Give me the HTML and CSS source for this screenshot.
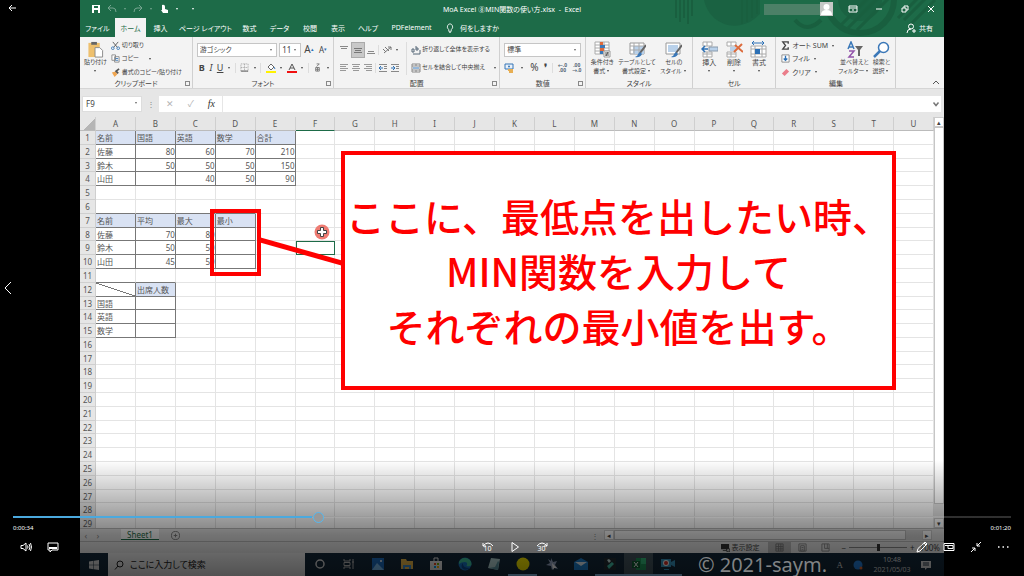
FILE: index.html
```html
<!DOCTYPE html>
<html lang="ja">
<head>
<meta charset="utf-8">
<title>MoA Excel ⑧MIN関数の使い方.xlsx - Excel</title>
<link rel="stylesheet" href="styles.css">
</head>
<body>
<div class="player">
<main class="screen">
  <header class="titlebar">
    <svg class="pattern" viewBox="0 0 280 37" aria-hidden="true"><g fill="none" stroke="#195f3f" stroke-width="2">
      <path d="M12 0v18M16 0v22M20 0v18M24 0v24M28 0v16"/>
      <path d="M40 0h56v14q-4 4-10 8-20 9-36-4-8-8-10-18z" fill="#1a6242" stroke="none"/><path d="M78 0v24M83 0v22M88 0v18M93 0v14"/>
      <path d="M131 20q12 14 26 0" stroke-width="4"/><circle cx="196" cy="-1" r="34" stroke-width="6"/><circle cx="196" cy="-1" r="22" fill="#1a6242" stroke="none"/>
      <path d="M177 25l28-28M184 28l32-32M193 30l32-32M234 18l24-24M240 20l30-30M247 24l24-24" stroke-width="3"/></g></svg>
    <div class="quick">
      <button aria-label="保存"><svg viewBox="0 0 10 10" class="i10"><path d="M1 1h8v8H1z" fill="#fff"/><path d="M3 2h4v2H3zM3 6h4v3H3z" fill="#1d6b48"/></svg></button>
      <button class="dim" aria-label="元に戻す"><svg viewBox="0 0 10 10" class="i10"><path d="M4 1L1 4l3 3M1 4h5q3 0 3 4" fill="none" stroke="currentColor"/></svg></button><i class="dd dim"></i>
      <button class="dim" aria-label="やり直し"><svg viewBox="0 0 10 10" class="i10"><path d="M6 1l3 3-3 3M9 4H4Q1 4 1 8" fill="none" stroke="currentColor"/></svg></button><i class="dd dim"></i>
      <button aria-label="タッチ"><svg viewBox="0 0 10 10" class="i10"><path d="M3 1a2 2 0 0 1 3 2v2l3 1v3H4L2 6h1z" fill="#fff"/></svg></button><i class="dd"></i><i class="dd gap"></i>
    </div>
    <h1>MoA Excel ⑧MIN関数の使い方.xlsx&nbsp; -&nbsp; Excel</h1>
    <div class="win">
      <span class="account"></span>
      <svg viewBox="0 0 13 14" class="avatar"><path d="M0 0h13v14H0z" fill="#c5c8c6"/><circle cx="6.500" cy="5" r="3" fill="#fff"/><path d="M1 13q0-5 5.500-5t5.500 5z" fill="#fff"/></svg>
      <button aria-label="リボン表示"><svg viewBox="0 0 10 10" class="i10"><path d="M1 2h8v6H1zM1 4h8M5 7V5" fill="none" stroke="#fff"/></svg></button>
      <button aria-label="最小化"><svg viewBox="0 0 10 10" class="i10"><path d="M2 5h6" stroke="#fff"/></svg></button>
      <button aria-label="元のサイズ"><svg viewBox="0 0 10 10" class="i10"><path d="M2 4h4v4H2zM4 4V2h4v4H6" fill="none" stroke="#fff"/></svg></button>
      <button aria-label="閉じる"><svg viewBox="0 0 10 10" class="i10"><path d="M2 2l6 6M8 2L2 8" stroke="#fff"/></svg></button>
    </div>
  </header>
  <nav class="tabs">
    <button>ファイル</button><button class="on">ホーム</button><button>挿入</button><button>ページ レイアウト</button><button>数式</button><button>データ</button><button>校閲</button><button>表示</button><button>ヘルプ</button><button>PDFelement</button>
    <button class="tell"><svg viewBox="0 0 10 12" class="i10"><path d="M3.500 8Q1 6 2 3.500 3 1 5 1t3 2.500Q9 6 6.500 8v2h-3zM4 11.500h2" fill="none" stroke="#fff"/></svg>何をしますか</button>
    <button class="share"><svg viewBox="0 0 10 10" class="i10"><circle cx="5" cy="3.500" r="2.500" fill="none" stroke="#fff"/><path d="M1 10q0-4 4-4M6 8h4M8 6v4" fill="none" stroke="#fff"/></svg>共有</button>
  </nav>

  <section class="ribbon">
    <div class="group g-clip small"><div class="body">
      <button class="big"><svg viewBox="0 0 17 18" class="i17"><path d="M1 2h12v15H1z" fill="#eec06e"/><path d="M4 1h6v3H4z" fill="#666"/><path d="M8 7h5l3 3v7H8z" fill="#fff" stroke="#888"/></svg>貼り付け<i class="dd"></i></button>
      <div class="list">
        <button><svg viewBox="0 0 10 10" class="i9"><path d="M2 1l5 6M8 1L3 7" stroke="#555" fill="none"/><circle cx="2" cy="8" r="1.500" fill="none" stroke="#3d7ab8"/><circle cx="8" cy="8" r="1.500" fill="none" stroke="#3d7ab8"/></svg>切り取り</button>
        <button><svg viewBox="0 0 10 10" class="i9"><path d="M1 1h4v6H1zM4 3h5v6H4z" fill="#fff" stroke="#888"/><path d="M5 5h3M5 7h3" stroke="#3d7ab8"/></svg>コピー<i class="dd gap"></i></button>
        <button><svg viewBox="0 0 10 10" class="i9"><path d="M1 5l4-1 2 3-3 3z" fill="#efa550"/><path d="M5 4l4-3M5 3l3 3" stroke="#555" stroke-width="2"/></svg>書式のコピー/貼り付け</button>
      </div></div><div class="label">クリップボード<i class="launch"></i></div></div>

    <div class="group g-font"><div class="body rows">
      <div class="row"><span class="sel wide"><select aria-label="フォント"><option>游ゴシック</option></select></span><span class="sel size"><select aria-label="サイズ"><option>11</option></select></span><button class="fa">A<sup>▴</sup></button><button class="fb">A<sup>▾</sup></button></div>
      <div class="row tools"><button><b>B</b></button><button><em>I</em></button><button><u>U</u></button><i class="dd"></i><i class="sep"></i>
        <button aria-label="罫線"><svg viewBox="0 0 10 10" class="i9"><path d="M1 1h8v8H1zM5 1v8M1 5h8" fill="none" stroke="#999" stroke-dasharray="1 1"/><path d="M1 9h8" stroke="#555"/></svg></button><i class="dd"></i><i class="sep"></i>
        <button aria-label="塗りつぶし"><svg viewBox="0 0 10 10" class="i10"><path d="M2 4l3-3 3 3-3 3z" fill="#fff" stroke="#666"/><path d="M8 4l1 2" stroke="#3d7ab8"/><path d="M0 8h10v2H0z" fill="#fff200"/></svg></button><i class="dd"></i>
        <button aria-label="フォントの色"><svg viewBox="0 0 10 10" class="i10"><path d="M2 7l3-6 3 6M3 5h4" fill="none" stroke="#555"/><path d="M0 8h10v2H0z" fill="#f01010"/></svg></button><i class="dd"></i><i class="sep"></i>
        <button aria-label="ふりがな"><svg viewBox="0 0 10 10" class="i9"><path d="M4 1h3L4 4M3 5h4v4H3zM3 7h4M5 5v4" fill="none" stroke="#777"/></svg></button><i class="dd"></i></div>
      </div><div class="label">フォント<i class="launch"></i></div></div>

    <div class="group g-align"><div class="body two">
      <div class="rows"><div class="row tools">
        <button aria-label="上揃え"><svg viewBox="0 0 10 10" class="i10"><path d="M1 1.500h8M2 3.500h6" stroke="#888"/></svg></button>
        <button class="pressed" aria-label="上下中央揃え"><svg viewBox="0 0 10 10" class="i10"><path d="M1 3.500h8M2 5.500h6M1 7.500h8" stroke="#777"/></svg></button>
        <button aria-label="下揃え"><svg viewBox="0 0 10 10" class="i10"><path d="M2 6.500h6M1 8.500h8" stroke="#888"/></svg></button><i class="sep"></i>
        <button aria-label="方向"><svg viewBox="0 0 10 10" class="i10"><path d="M1 4l3 3M3 2l4 4M2 8l7-6M6 2h3v3" fill="none" stroke="#777"/></svg></button><i class="dd"></i></div>
      <div class="row tools">
        <button aria-label="左揃え"><svg viewBox="0 0 10 10" class="i10"><path d="M1 1.500h8M1 3.500h6M1 5.500h8M1 7.500h6" stroke="#999"/></svg></button>
        <button aria-label="中央揃え"><svg viewBox="0 0 10 10" class="i10"><path d="M1 1.500h8M2 3.500h6M1 5.500h8M2 7.500h6" stroke="#999"/></svg></button>
        <button aria-label="右揃え"><svg viewBox="0 0 10 10" class="i10"><path d="M1 1.500h8M3 3.500h6M1 5.500h8M3 7.500h6" stroke="#999"/></svg></button><i class="sep"></i>
        <button aria-label="インデント減"><svg viewBox="0 0 10 10" class="i10"><path d="M1 1.500h8M6 3.500h3M6 5.500h3M1 8.500h8" stroke="#888"/><path d="M5 5H1M3 3L1 5l2 2" fill="none" stroke="#2c70b5"/></svg></button>
        <button aria-label="インデント増"><svg viewBox="0 0 10 10" class="i10"><path d="M1 1.500h8M6 3.500h3M6 5.500h3M1 8.500h8" stroke="#888"/><path d="M1 5h4M3 3l2 2-2 2" fill="none" stroke="#2c70b5"/></svg></button></div></div>
      <div class="rows wrap small"><div class="row"><button><svg viewBox="0 0 10 10" class="i10"><path d="M1 4h2v3H1zM5 1v4h2V3H5M2 9h5M9 5v4H7" fill="none" stroke="#567"/></svg>折り返して全体を表示する</button></div>
      <div class="row"><button><svg viewBox="0 0 10 10" class="i10"><path d="M1 1h8v8H1zM1 3h8M1 7h8M5 1v2M5 7v2" fill="#fff" stroke="#888"/><path d="M2 5h6" stroke="#2c70b5"/></svg>セルを結合して中央揃え<i class="dd gap"></i></button></div></div>
      </div><div class="label">配置<i class="launch"></i></div></div>

    <div class="group g-num"><div class="body rows">
      <div class="row"><span class="sel full"><select aria-label="表示形式"><option>標準</option></select></span></div>
      <div class="row tools"><button aria-label="通貨"><svg viewBox="0 0 10 10" class="i10"><path d="M1 1h8v5H1z" fill="#e8f1fb" stroke="#3575b5"/><circle cx="5" cy="3.500" r="1" fill="#3575b5"/><path d="M4 7h5M5 9h4" stroke="#e7ae52" stroke-width="2"/></svg></button><i class="dd"></i><button class="pct">%</button><button class="pct"><b>❜</b></button><i class="sep"></i>
      <button class="dec">←.0<br>.00</button><button class="dec">.00<br>→.0</button></div>
      </div><div class="label">数値<i class="launch"></i></div></div>

    <div class="group g-style"><div class="body small">
      <button class="big"><svg viewBox="0 0 17 17" class="i17"><path d="M1 1h14v12H1zM1 4h14M1 7h14M1 10h14M6 1v12M10 1v12" fill="#fff" stroke="#aaa"/><path d="M6 1h3v3H6zM6 7h4v3H6z" fill="#e0693a"/><path d="M6 4h5v3H6zM6 10h3v3H6z" fill="#3b78b8"/><path d="M10 10h6v6h-6z" fill="#fff" stroke="#999"/><path d="M11 12h4M11 14h4M14 11l-2 4" stroke="#555"/></svg>条件付き<span>書式<i class="dd"></i></span></button>
      <button class="big"><svg viewBox="0 0 17 17" class="i17"><path d="M1 2h14v11H1z" fill="#fff" stroke="#999"/><path d="M4 5h11v8H4z" fill="#b9d1ea"/><path d="M1 5h14M1 9h14M5 2v11M10 2v11" stroke="#aaa"/><path d="M17 4l-6 8" stroke="#666" stroke-width="2"/><path d="M11 11l2 2q-2 4-7 3 3-1 3-3z" fill="#3b78b8"/></svg>テーブルとして<span>書式設定<i class="dd"></i></span></button>
      <button class="big"><svg viewBox="0 0 17 17" class="i17"><path d="M1 2h14v11H1z" fill="#fff" stroke="#999"/><path d="M3 4h10v7H3z" fill="#b9d1ea"/><path d="M17 4l-6 8" stroke="#666" stroke-width="2"/><path d="M11 11l2 2q-2 4-7 3 3-1 3-3z" fill="#3b78b8"/></svg>セルの<span>スタイル<i class="dd"></i></span></button>
      </div><div class="label">スタイル</div></div>

    <div class="group g-cell"><div class="body">
      <button class="big"><svg viewBox="0 0 17 17" class="i17"><path d="M2 1h9v4H2zM6 1v4M2 11h9v5H2zM6 11v5M2 13h9" fill="#fff" stroke="#aaa"/><path d="M8 6h9v4H8z" fill="#b9d1ea" stroke="#89a"/><path d="M7 8H1M4 5L1 8l3 3" fill="none" stroke="#2c70b5" stroke-width="1.500"/></svg>挿入<i class="dd"></i></button>
      <button class="big"><svg viewBox="0 0 17 17" class="i17"><path d="M1 1h9v4H1zM5 1v4M1 11h9v5H1zM5 11v5M1 13h9" fill="#fff" stroke="#aaa"/><path d="M4 6h6v4H4z" fill="#b9d1ea"/><path d="M9 4l8 7M16 3l-8 8" stroke="#dc6b3c" stroke-width="2"/></svg>削除<i class="dd"></i></button>
      <button class="big"><svg viewBox="0 0 17 17" class="i17"><path d="M1 5h15v11H1zM1 8h15M1 13h15M5 5v11M12 5v11" fill="#fff" stroke="#aaa"/><path d="M5 8h5v5H5z" fill="#2c70b5"/><path d="M2 2h12M4 0L2 2l2 2M12 0l2 2-2 2" fill="none" stroke="#2c70b5"/></svg>書式<i class="dd"></i></button>
      </div><div class="label">セル</div></div>

    <div class="group g-edit"><div class="body">
      <div class="list">
        <button><svg viewBox="0 0 10 10" class="i9"><path d="M8 3V1H2l3 4-3 4h6V7" fill="none" stroke="#444" stroke-width="1.500"/></svg>オート SUM<i class="dd"></i></button>
        <button><svg viewBox="0 0 10 10" class="i9"><path d="M1 1h8v8H1z" fill="#fff" stroke="#888"/><path d="M5 2v5M3 5l2 2 2-2" fill="none" stroke="#2c70b5" stroke-width="1.500"/></svg>フィル<i class="dd"></i></button>
        <button><svg viewBox="0 0 10 10" class="i9"><path d="M1 6l5-5 3 3-5 5z" fill="#ea7d8a"/></svg>クリア<i class="dd"></i></button>
      </div>
      <button class="big small"><svg viewBox="0 0 17 17" class="i17"><path d="M2 8l3-7 3 7M3 6h4" fill="none" stroke="#3b78b8" stroke-width="1.500"/><path d="M3 10h5l-5 6h5" fill="none" stroke="#9354ab" stroke-width="1.500"/><path d="M9 5h8l-3 4v6h-2V9z" fill="#666"/></svg>並べ替えと<span>フィルター<i class="dd"></i></span></button>
      <button class="big small"><svg viewBox="0 0 17 17" class="i17"><circle cx="10.500" cy="6.500" r="5" fill="#fff" stroke="#3b78b8" stroke-width="1.500"/><path d="M7 10l-6 6" stroke="#3b78b8" stroke-width="2.500"/></svg>検索と<span>選択<i class="dd"></i></span></button>
      </div><div class="label">編集</div></div>
    <div class="group g-end"><button aria-label="リボンを折りたたむ"><svg viewBox="0 0 8 8" class="i8"><path d="M1 6l3-3 3 3" fill="none" stroke="#555"/></svg></button></div>
  </section>

  <section class="formula">
    <span class="sel name"><input aria-label="名前ボックス" value="F9"></span><span class="dots">⋮</span>
    <div class="fx"><button class="dim" aria-label="キャンセル">✕</button><button class="dim" aria-label="入力">✓</button><button class="fn">fx</button></div>
    <label class="fin"><input aria-label="数式"><svg viewBox="0 0 8 8" class="i8"><path d="M1.500 2.500L4 5.500l2.500-3" fill="none" stroke="#777" stroke-width="1.500"/></svg></label>
  </section>

  <section class="work">
    <div class="canvas">
      <table class="sheet" id="sheet"></table>
      <div class="highlight"></div>
      <svg class="link" viewBox="0 0 82 30" aria-hidden="true"><path d="M0 3l82 23" stroke="#f00" stroke-width="5"/></svg>
      <svg class="cursor" viewBox="0 0 16 16" aria-hidden="true"><circle cx="8" cy="8" r="7.500" fill="#ee7b72"/><path d="M6.500 3.500h3v3h3v3h-3v3h-3v-3h-3v-3h3z" fill="#fff" stroke="#444"/></svg>
      <div class="callout"><p>ここに、最低点を出したい時、</p><p>MIN関数を入力して</p><p>それぞれの最小値を出す。</p></div>
    </div>
    <div class="vscroll"><button aria-label="上へ">▴</button><span></span><button aria-label="下へ">▾</button></div>
  </section>

  <div class="sheetbar"><span class="arrows">‹</span><span class="arrows">›</span><button class="sheet-tab">Sheet1</button><button class="add" aria-label="シート追加"><svg viewBox="0 0 10 10" class="i9"><circle cx="5" cy="5" r="4.500" fill="none" stroke="#777"/><path d="M5 3v4M3 5h4" stroke="#777"/></svg></button><span class="dots">⋮</span><div class="hscroll"><button aria-label="左へ">◂</button><span></span><button aria-label="右へ">▸</button></div></div>
  <div class="status"><span class="disp"><svg viewBox="0 0 10 10" class="i9"><path d="M0 1h9v6H0zM2 8h4v1H2z" fill="#333"/><circle cx="8" cy="8" r="2" fill="#bbb" stroke="#333"/></svg>表示設定</span>
    <button class="on" aria-label="標準"><svg viewBox="0 0 10 10" class="i9"><path d="M1 1h8v8H1zM1 4h8M1 6.500h8M4 1v8M6.500 1v8" fill="none" stroke="#777"/></svg></button>
    <button aria-label="ページ レイアウト"><svg viewBox="0 0 10 10" class="i9"><path d="M1 1h8v8H1zM3 3h4v6H3zM4 5h2M4 7h2" fill="none" stroke="#888"/></svg></button>
    <button aria-label="改ページ"><svg viewBox="0 0 10 10" class="i9"><path d="M1 1h8v8H1zM4 1v5h5M7 1v5" fill="none" stroke="#888"/></svg></button>
    <span>−</span><input type="range" class="zoom" aria-label="ズーム"><span>+</span><span class="pc">100%</span></div>

  <footer class="taskbar">
    <button class="start" aria-label="スタート"><svg viewBox="0 0 10 10" class="i10"><path d="M0 1.500l4.500-.7v4H0zM5 .7L10 0v4.800H5zM0 5.300h4.500v4L0 8.600zM5 5.300h5V10l-5-.7z" fill="#ddd"/></svg></button>
    <label class="find"><svg viewBox="0 0 10 10" class="i10"><circle cx="6" cy="4" r="3" fill="none" stroke="#222"/><path d="M4 6L1 9.500" stroke="#222"/></svg><input placeholder="ここに入力して検索" aria-label="検索"></label>
    <div class="apps">
      <button aria-label="Cortana"><svg viewBox="0 0 14 14"><circle cx="7" cy="7" r="4" fill="none" stroke="#ddd" stroke-width="1.500"/></svg></button>
      <button aria-label="タスクビュー"><svg viewBox="0 0 14 14"><path d="M2 2v2h6V2M2 12v-2h6v2M2 5.500h6v3H2zM11 2v10M10 5h2" fill="none" stroke="#bbb"/></svg></button>
      <button aria-label="フォト"><svg viewBox="0 0 14 14"><path d="M1 1h12v12H1z" fill="#1c6fc4"/><path d="M1 13l5-7 7 7z" fill="#7cc0f5"/><circle cx="10" cy="4" r="1" fill="#fff"/></svg></button>
      <button aria-label="エクスプローラー"><svg viewBox="0 0 14 14"><path d="M1 2h5l1 2h6v8H1z" fill="#f0bd4a"/><path d="M3 8h8v4H3z" fill="#3f8fd0"/><path d="M5 10h4v2H5z" fill="#f0bd4a"/></svg></button>
      <button aria-label="ストア"><svg viewBox="0 0 14 14"><path d="M1 4h12v9H1z" fill="#eee"/><path d="M5 4V1h4v3" fill="none" stroke="#eee"/><path d="M5 6h2v2H5z" fill="#f04a22"/><path d="M8 6h2v2H8z" fill="#7fba00"/><path d="M5 9h2v2H5z" fill="#00a4ef"/><path d="M8 9h2v2H8z" fill="#ffb900"/></svg></button>
      <button aria-label="Edge"><svg viewBox="0 0 14 14"><circle cx="7" cy="7" r="6.500" fill="#1878c8"/><path d="M1 5a6.500 6.500 0 0 1 12.500 2q0 3-5 2 2-4-2-4-3 0-5.500 2z" fill="#40c9a0"/><path d="M5 6q-1 5 7 5-4 3-7 1-3-3 0-6z" fill="#0c4c93"/></svg></button>
      <button aria-label="メモ"><svg viewBox="0 0 14 14"><path d="M4 1l9 1-2 11-10-2z" fill="#b9d9d8"/><path d="M2 11l6-1 3-6 1 1-1 8z" fill="#5f99a5"/></svg></button>
      <button class="run" aria-label="マーカー"><svg viewBox="0 0 14 14"><circle cx="7" cy="7" r="6.500" fill="#fff000"/></svg></button>
      <button aria-label="ポインター"><svg viewBox="0 0 14 14"><path d="M6 1l2 4 4-1-2 4 3 4-4-1-2 2-1-4-5-1 4-2-2-4 3 2z" fill="#9cabc9"/><path d="M7 6l5 5H9l-1 2z" fill="#fff"/></svg></button>
      <button aria-label="メール"><svg viewBox="0 0 14 14"><path d="M0 5l7-4 7 4v8H0z" fill="#1d83d4"/><path d="M1 5h12L7 9z" fill="#e8f3fc"/></svg></button>
      <button class="run" aria-label="Filmora"><svg viewBox="0 0 14 14"><path d="M1 1h12v12H1z" fill="#222d33"/><path d="M4 3l2-1 2 2-2 2z" fill="#cfeae6"/><path d="M4 9l5-4 2 2-5 5z" fill="#45c7ae"/></svg></button>
      <button class="run active" aria-label="Excel"><svg viewBox="0 0 14 14"><path d="M4 1h10v12H4z" fill="#1f9a5c"/><path d="M9 1h5v6H9z" fill="#35c481"/><path d="M0 4h8v7H0z" fill="#0e6135"/><path d="M2 5l4 5M6 5l-4 5" stroke="#fff"/></svg></button>
      <button class="run" aria-label="録画"><svg viewBox="0 0 14 14"><path d="M0 2h10v8H0zM10 5l4-2v7l-4-2zM3 12h5v1H3z" fill="#3799c6"/><circle cx="5" cy="6" r="3" fill="#fff"/><circle cx="5" cy="6" r="2" fill="#dc2f26"/></svg></button>
    </div>
    <div class="tray"><span class="ime">A</span><svg viewBox="0 0 10 10" class="i10"><circle cx="5" cy="5" r="4.500" fill="#2481de"/><circle cx="8" cy="8" r="1.500" fill="#e36b30"/></svg><time>10:48<br>2021/05/03</time><svg viewBox="0 0 10 10" class="i10"><path d="M0 1h10v7H6L4 10V8H0z" fill="#ddd"/><path d="M2 3h6M2 5h6" stroke="#234"/></svg></div>
  </footer>
</main>

<div class="shade"></div>
<div class="watermark">© 2021-saym.</div>
<button class="back" aria-label="戻る"><svg viewBox="0 0 10 10" class="i10"><path d="M9 5H2M5 2L2 5l3 3" fill="none" stroke="#fff"/></svg></button>
<button class="prev" aria-label="前へ"><svg viewBox="0 0 10 14" class="tall"><path d="M8 1L2 7l6 6" fill="none" stroke="#fff"/></svg></button>
<div class="controls">
  <input class="seek" type="range" min="0" max="1000" value="304" aria-label="再生位置">
  <div class="times"><span>0:00:34</span><span>0:01:20</span></div>
  <div class="buttons">
    <div class="side"><button aria-label="音量"><svg viewBox="0 0 12 12"><path d="M1 4.500h2L6 2v8L3 7.500H1z" fill="none" stroke="#fff"/><path d="M7.500 4.500q1 1.500 0 3M9 3q2 3 0 6M10.500 2q2 4 0 8" fill="none" stroke="#fff"/></svg></button><button aria-label="字幕"><svg viewBox="0 0 12 12"><path d="M1 2h10v7H5l-2 2V9H1z" fill="none" stroke="#fff"/><path d="M2 7h8" stroke="#fff" stroke-width="2"/></svg></button></div>
    <div class="mid"><button aria-label="10秒戻る"><svg viewBox="0 0 12 12"><path d="M1 5q5-6 10 0M1 2v3h3" fill="none" stroke="#fff"/></svg><small>10</small></button><button aria-label="再生"><svg viewBox="0 0 12 12"><path d="M3 1.500L9.500 6 3 10.500z" fill="none" stroke="#fff"/></svg></button><button aria-label="30秒進む"><svg viewBox="0 0 12 12"><path d="M1 5q5-6 10 0M11 2v3H8" fill="none" stroke="#fff"/></svg><small>30</small></button></div>
    <div class="side end"><button aria-label="編集"><svg viewBox="0 0 12 12"><path d="M1 11l1-3.500L9 1l2 2-7 7zM8 2l2 2" fill="none" stroke="#fff"/></svg></button><button aria-label="ミニ表示"><svg viewBox="0 0 12 12"><path d="M1 2.500h10v7H1z" fill="none" stroke="#fff"/><path d="M5 4.500h5v3H5zM2 4.500h3" fill="none" stroke="#fff"/></svg></button><button aria-label="全画面終了"><svg viewBox="0 0 12 12"><path d="M11 1L7 5M7 2v3h3M1 11l4-4M2 7h3v3" fill="none" stroke="#fff"/></svg></button><button aria-label="その他"><svg viewBox="0 0 12 12"><path d="M1 6h1.500M5.500 6H7M10 6h1.500" stroke="#fff" stroke-width="1.500"/></svg></button></div>
  </div>
</div>
</div>
<script src="sheet.js"></script>
</body>
</html>
```

FILE: styles.css
```css
* { box-sizing: border-box; }
body { margin: 0; background: #000; font-family: "Noto Sans", "Noto Sans CJK JP", sans-serif; font-size: 7px; color: #444; }
button, input, select { font: inherit; color: inherit; background: none; border: 0; padding: 0; margin: 0; min-width: 0; border-radius: 0; outline: 0; }
button { display: flex; align-items: center; justify-content: center; white-space: nowrap; }
select { appearance: none; width: 100%; }
svg { display: block; flex: none; }
p, h1 { margin: 0; }
.i8 { width: 8px; height: 8px; }
.i9 { width: 9px; height: 9px; }
.i10 { width: 10px; height: 10px; }
.i17 { width: 17px; height: 17px; }
.tall { width: 10px; height: 14px; }
.small { font-size: 6px; }
.player { position: relative; height: 100vh; overflow: hidden; }
.screen { height: 100%; margin: 0 80px; display: flex; flex-direction: column; background: #e6e6e6; font-feature-settings: "palt"; }

.titlebar { position: relative; height: 18px; flex: none; display: grid; grid-template-columns: 1fr auto 1fr; align-items: center; background: #1d6b48; color: #fff; }
.pattern { position: absolute; top: 0; right: 0; width: 280px; height: 37px; }
.titlebar > div, .titlebar h1 { position: relative; }
.titlebar h1 { font-size: 7px; font-weight: 400; }
.quick { display: flex; align-items: center; gap: 4px; padding-left: 10px; }
.quick button { width: 12px; }
.dim { opacity: .4; }
.dd { flex: none; display: inline-block; width: 0; height: 0; margin: 0 2px; border: solid transparent; border-width: 2px 1px 0; border-top-color: currentColor; vertical-align: middle; }
.gap { margin-left: 8px; }
.win { display: flex; align-items: center; justify-content: flex-end; gap: 16px; padding-right: 8px; }
.account { width: 56px; height: 11px; margin-right: -16px; background: #4c8067; }
.avatar { width: 13px; height: 14px; margin-right: -1px; }

.tabs { height: 19px; flex: none; display: grid; grid-template-columns: 35px 31px 29px 61px 27px 33px 28px 28px 32px 55px 66px 1fr; background: #1d6b48; color: #fff; }
.tabs .on { background: #f3f3f3; color: #1d6b48; }
.tell { gap: 5px; }
.tabs .share { position: relative; justify-content: flex-end; gap: 3px; padding-right: 11px; }

.ribbon { height: 52px; flex: none; display: flex; background: #f3f3f3; border-bottom: 1px solid #d5d5d5; line-height: 9px; }
.group { display: flex; flex-direction: column; flex: 1 1 0; min-width: 0; padding: 2px 4px 0; border-right: 1px solid #d0d0d0; }
.g-clip { flex-grow: 113; }
.g-font { flex-grow: 144; }
.g-align { flex-grow: 171; }
.g-num { flex-grow: 84; }
.g-style { flex-grow: 106; }
.g-style .body { margin: 0 -2px; }
.g-cell { flex-grow: 81; }
.g-edit { flex-grow: 121; }
.group.g-end { flex-grow: 43; border: 0; align-items: flex-end; justify-content: flex-end; padding-bottom: 2px; }
.body { flex: 1; display: flex; justify-content: space-around; }
.label { position: relative; height: 9px; text-align: center; font-size: 7px; }
.launch { position: absolute; right: -2px; top: 2px; width: 5px; height: 5px; border: solid #888; border-width: 1px 0 0 1px; }
.launch::after { content: ""; position: absolute; right: 0; bottom: 0; width: 3px; height: 3px; border: solid #888; border-width: 0 1px 1px 0; }
.big { flex-direction: column; justify-content: flex-start; padding-top: 2px; }
.big > .dd { margin-top: 3px; }
.list { display: flex; flex-direction: column; justify-content: space-around; align-items: flex-start; }
.list button { gap: 2px; height: 13px; }
.g-clip .list { flex: 1; padding-left: 4px; }
.rows { display: flex; flex-direction: column; justify-content: flex-start; gap: 3px; padding-top: 3px; }
.row { display: flex; align-items: center; height: 15px; gap: 2px; }
.tools { justify-content: space-between; }
.g-font .tools { padding-left: 2px; font-size: 9px; }
.g-font .rows .dd { margin: 0; }
.two { gap: 6px; justify-content: flex-start; }
.two > .rows { padding-top: 0; margin-top: 3px; }
.two > .rows:first-child { width: 68px; padding-left: 1px; }
.two > .wrap { border-left: 1px solid #ddd; padding-left: 4px; margin-bottom: 4px; }
.wrap button { gap: 1px; }
.pressed { width: 12px; height: 14px; background: #c8c8c8; outline: 1px solid #aaa; }
.sep { width: 1px; height: 10px; background: #ddd; }
.sel { position: relative; display: flex; height: 14px; background: #fff; border: 1px solid #c6c6c6; padding-left: 2px; }
.sel::after { content: ""; position: absolute; right: 4px; top: 5px; border: solid transparent; border-width: 2px 1px 0; border-top-color: #666; }
.wide { width: 86px; }
.size { width: 23px; font-size: 8px; }
.full { width: 100%; }
.fa, .fb { width: 13px; font-size: 10px; }
.fb { font-size: 8px; }
sup { font-size: 5px; color: #2c70b5; line-height: 8px; align-self: flex-start; }
.pct { font-size: 10px; }
.dec { font-size: 5px; line-height: 5px; font-weight: 700; color: #567; }

.formula { height: 28px; flex: none; display: flex; align-items: center; padding: 1px 3px 0 2px; }
.name { width: 60px; height: 16px; font-size: 8px; border-color: #ddd; padding-left: 3px; }
.name input { width: 100%; }
.dots { width: 17px; text-align: center; font-size: 8px; color: #888; }
.fx { display: flex; width: 63px; height: 16px; background: #fff; justify-content: space-around; font-size: 9px; }
.fn { font: italic 10px "Liberation Serif", serif; color: #333; }
.fin { flex: 1; display: flex; align-items: center; height: 16px; margin-left: 1px; padding-right: 1px; background: #fff; }
.fin input { flex: 1; }

.work { flex: 1; min-height: 0; display: flex; }
.canvas { position: relative; flex: 1; min-width: 0; overflow: hidden; background: #fff; }
.sheet { display: grid; grid-template-columns: 16px repeat(21, minmax(0, 1fr)); grid-template-rows: 14px repeat(29, minmax(0, 1fr)); height: calc(100% + 3px); font-size: 8px; line-height: 13px; color: #555; font-feature-settings: normal; }
.sheet tbody, .sheet thead, .sheet tr { display: contents; }
.sheet th, .sheet td { padding: 0 1px; overflow: hidden; white-space: nowrap; border: solid #e4e4e4; border-width: 0 1px 1px 0; font-weight: 400; text-align: left; }
.sheet th { background: #e6e6e6; border-color: #cfcfcf; text-align: center; padding: 0; }
.sheet thead th { border-bottom-color: #bbb; }
.sheet thead th.cur { border-bottom-color: #1d6b48; }
.sheet .corner { background: linear-gradient(135deg, #e6e6e6 60%, #b5b5b5 60%); }
.sheet .num { text-align: right; padding: 0; }
.sheet .box { border-color: #777; }
.sheet .under { border-bottom-color: #777; }
.sheet .head { background: #d9e2f3; }
.sheet .diag { background: linear-gradient(to top right, transparent 48%, #777 48%, #777 52%, transparent 52%); }
.sheet .cell-on { outline: 1px solid #1d6b48; outline-offset: -1px; }
.highlight { position: absolute; left: 130px; top: 92px; width: 51px; height: 67px; border: 4px solid #f00; }
.link { position: absolute; left: 180px; top: 120px; width: 82px; height: 30px; }
.cursor { position: absolute; left: 234px; top: 107px; width: 16px; height: 16px; }
.callout { position: absolute; left: 261px; top: 34px; width: 555px; height: 239px; display: flex; flex-direction: column; justify-content: center; border: 4px solid #f00; background: #fff; color: #f00; font: 500 39px/55px "Noto Sans CJK JP", sans-serif; font-feature-settings: normal; text-align: center; white-space: nowrap; }
.vscroll { width: 10px; display: flex; flex-direction: column; background: #e6e6e6; }
.vscroll button, .hscroll button { width: 10px; height: 10px; background: #fff; border: 1px solid #ccc; }
.vscroll span { flex: 1; margin-bottom: 14px; background: #fff; border: 1px solid #c6c6c6; }

.sheetbar { height: 13px; flex: none; display: flex; align-items: center; border-top: 1px solid #bbb; }
.arrows { width: 12px; text-align: center; font-size: 9px; color: #888; }
.arrows + .sheet-tab { margin-left: 17px; }
.sheet-tab { width: 38px; height: 11px; align-self: flex-start; font-size: 8px; color: #1d6b48; background: #fff; border-bottom: 1px solid #1d6b48; }
.add { margin: 0 auto 0 12px; }
.hscroll { display: flex; width: 38%; height: 10px; margin-right: 12px; background: #d5d5d5; }
.hscroll span { flex: 1; margin-right: 16px; background: #f5f5f5; border: 1px solid #bbb; }
.status { height: 12px; flex: none; display: flex; align-items: center; justify-content: flex-end; padding-right: 4px; border-top: 1px solid #bbb; font-size: 8px; }
.disp { display: flex; gap: 1px; margin-right: 9px; font-size: 7px; }
.status button { width: 23px; height: 11px; }
.status .on { background: #bbb; }
.zoom { appearance: none; width: 58px; height: 8px; margin: 0 3px; background: linear-gradient(#888, #888) center / 100% 1px no-repeat; }
.status > span { line-height: 10px; }
.status > button + span { margin-left: 4px; }
.pc { margin-left: 5px; }
.zoom::-webkit-slider-thumb { appearance: none; width: 3px; height: 7px; background: #333; }
.taskbar { height: 23px; flex: none; display: flex; background: #14293a; color: #ddd; }
.start { width: 28px; }
.find { width: 197px; display: flex; align-items: center; gap: 6px; padding-left: 6px; background: #f0f0f0; color: #222; font-size: 9px; }
.find input { flex: 1; }
.find input::placeholder { color: #222; opacity: 1; }
.apps { display: flex; }
.apps button { width: 29px; border-bottom: 1px solid transparent; }
.apps svg { width: 14px; height: 14px; }
.apps .run { border-color: #8cc4f0; border-width: 0 0 2px; }
.apps .active { background: #44565f; }
.tray { flex: 1; display: flex; align-items: center; justify-content: flex-end; gap: 10px; padding-right: 13px; }
.tray time { width: 38px; text-align: center; font-size: 7px; line-height: 10px; }
.ime { font: 9px "Liberation Serif", serif; }

.shade { position: absolute; inset: auto 0 0; height: 116px; background: linear-gradient(transparent, rgba(0, 0, 0, .5) 65%, rgba(0, 0, 0, .66)); pointer-events: none; }
.watermark { position: absolute; right: 197px; bottom: 0; font-size: 20px; line-height: 22px; color: rgba(170, 170, 170, .75); }
.back { position: absolute; left: 7px; top: 3px; }
.prev { position: absolute; left: 3px; top: calc(50% - 7px); }
.controls { position: absolute; inset: auto 0 0; height: 65px; padding: 0 13px; color: #fff; }
.controls svg { width: 12px; height: 12px; }
.seek { appearance: none; display: block; width: 100%; height: 12px; background: linear-gradient(90deg, #4ba9de 30%, rgba(190, 190, 190, .25) 30%) center / 100% 2px no-repeat; }
.seek::-webkit-slider-thumb { appearance: none; width: 11px; height: 11px; border: 1px solid #55b8ef; border-radius: 50%; background: #999; }
.times { display: flex; justify-content: space-between; font-size: 6px; line-height: 10px; }
.buttons { display: grid; grid-template-columns: 1fr auto 1fr; align-items: center; height: 28px; padding: 0 2px 0 7px; }
.side, .mid { display: flex; gap: 15px; }
.end { justify-content: flex-end; }
.mid button { position: relative; }
.mid small { position: absolute; top: 4px; font-size: 7px; line-height: 8px; }
```

FILE: sheet.js
```js
const columns = "ABCDEFGHIJKLMNOPQRSTU".split("");
const rows = {
  1: ["名前", "国語", "英語", "数学", "合計"],
  2: ["佐藤", 80, 60, 70, 210],
  3: ["鈴木", 50, 50, 50, 150],
  4: ["山田", "", 40, 50, 90],
  7: ["名前", "平均", "最大", "最小"],
  8: ["佐藤", 70, 80, ""],
  9: ["鈴木", 50, 50, ""],
  10: ["山田", 45, 50, ""],
  12: ["", "出席人数"],
  13: ["国語", ""],
  14: ["英語", ""],
  15: ["数学", ""]
};
const table = document.getElementById("sheet");
const head = table.createTHead().insertRow();
const addHeader = (row, text, name) => {
  const th = document.createElement("th");
  th.textContent = text;
  th.className = name;
  row.append(th);
};
addHeader(head, "", "corner");
columns.forEach(c => addHeader(head, c, c === "F" ? "cur" : ""));
const body = table.createTBody();
for (let r = 1; r <= 29; r++) {
  const tr = body.insertRow();
  addHeader(tr, r, "");
  columns.forEach((c, i) => {
    const td = tr.insertCell();
    const data = rows[r];
    if (data && i < data.length) {
      td.textContent = data[i];
      td.classList.add("box");
      if (typeof data[i] === "number") td.classList.add("num");
      if ([1, 7].includes(r) || (r === 12 && i === 1)) td.classList.add("head");
      if (r === 12 && i === 0) td.classList.add("diag");
    } else if (rows[r + 1] && !data && i < rows[r + 1].length) {
      td.classList.add("under");
    }
    if (r === 9 && c === "F") td.classList.add("cell-on");
  });
}
```
